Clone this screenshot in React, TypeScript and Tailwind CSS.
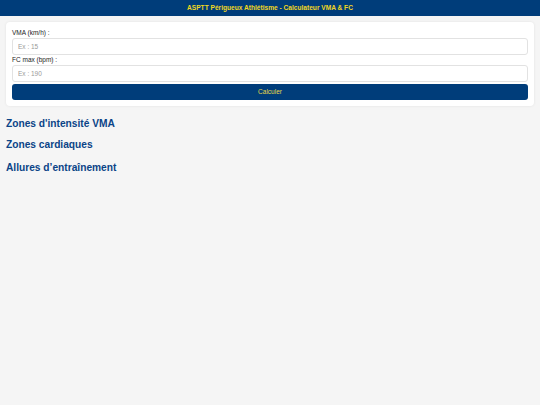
export default function App() {
  return (
    <div
      className="min-h-[405px] w-full bg-[#f5f5f5] text-[#222]"
      style={{ fontFamily: '"Liberation Sans", Arial, sans-serif' }}
    >
      <header className="flex h-[16px] items-center justify-center bg-[#003d7a]">
        <h1 className="text-[6.6px] font-bold leading-none text-[#f2d81f]">
          ASPTT Périgueux Athlétisme - Calculateur VMA &amp; FC
        </h1>
      </header>

      <main className="px-[6px] pt-[6px]">
        <div className="rounded-[4px] bg-white px-[6px] pt-[5px] pb-[6px] shadow-[0_0_3px_rgba(0,0,0,0.08)]">
          <label className="block text-[6.5px] leading-[11px] text-[#222]">VMA (km/h) :</label>
          <input
            type="number"
            placeholder="Ex : 15"
            className="block h-[17px] w-full rounded-[3px] border border-[#e2e2e2] bg-white px-[5px] text-[6.5px] outline-none placeholder:text-[#999]"
          />
          <label className="block text-[6.5px] leading-[10px] text-[#222]">FC max (bpm) :</label>
          <input
            type="number"
            placeholder="Ex : 190"
            className="block h-[17px] w-full rounded-[3px] border border-[#e2e2e2] bg-white px-[5px] text-[6.5px] outline-none placeholder:text-[#999]"
          />
          <button className="mt-[2px] block h-[16px] w-full rounded-[3px] bg-[#003d7a] text-[6.5px] leading-none text-[#e8d84a]">
            Calculer
          </button>
        </div>

        <h2 className="mt-[11px] text-[10.2px] font-bold leading-[14px] text-[#0b4487]">
          Zones d'intensité VMA
        </h2>
        <h2 className="mt-[7px] text-[10.2px] font-bold leading-[14px] text-[#0b4487]">
          Zones cardiaques
        </h2>
        <h2 className="mt-[9px] text-[10.2px] font-bold leading-[14px] text-[#0b4487]">
          Allures d’entraînement
        </h2>
      </main>
    </div>
  );
}
